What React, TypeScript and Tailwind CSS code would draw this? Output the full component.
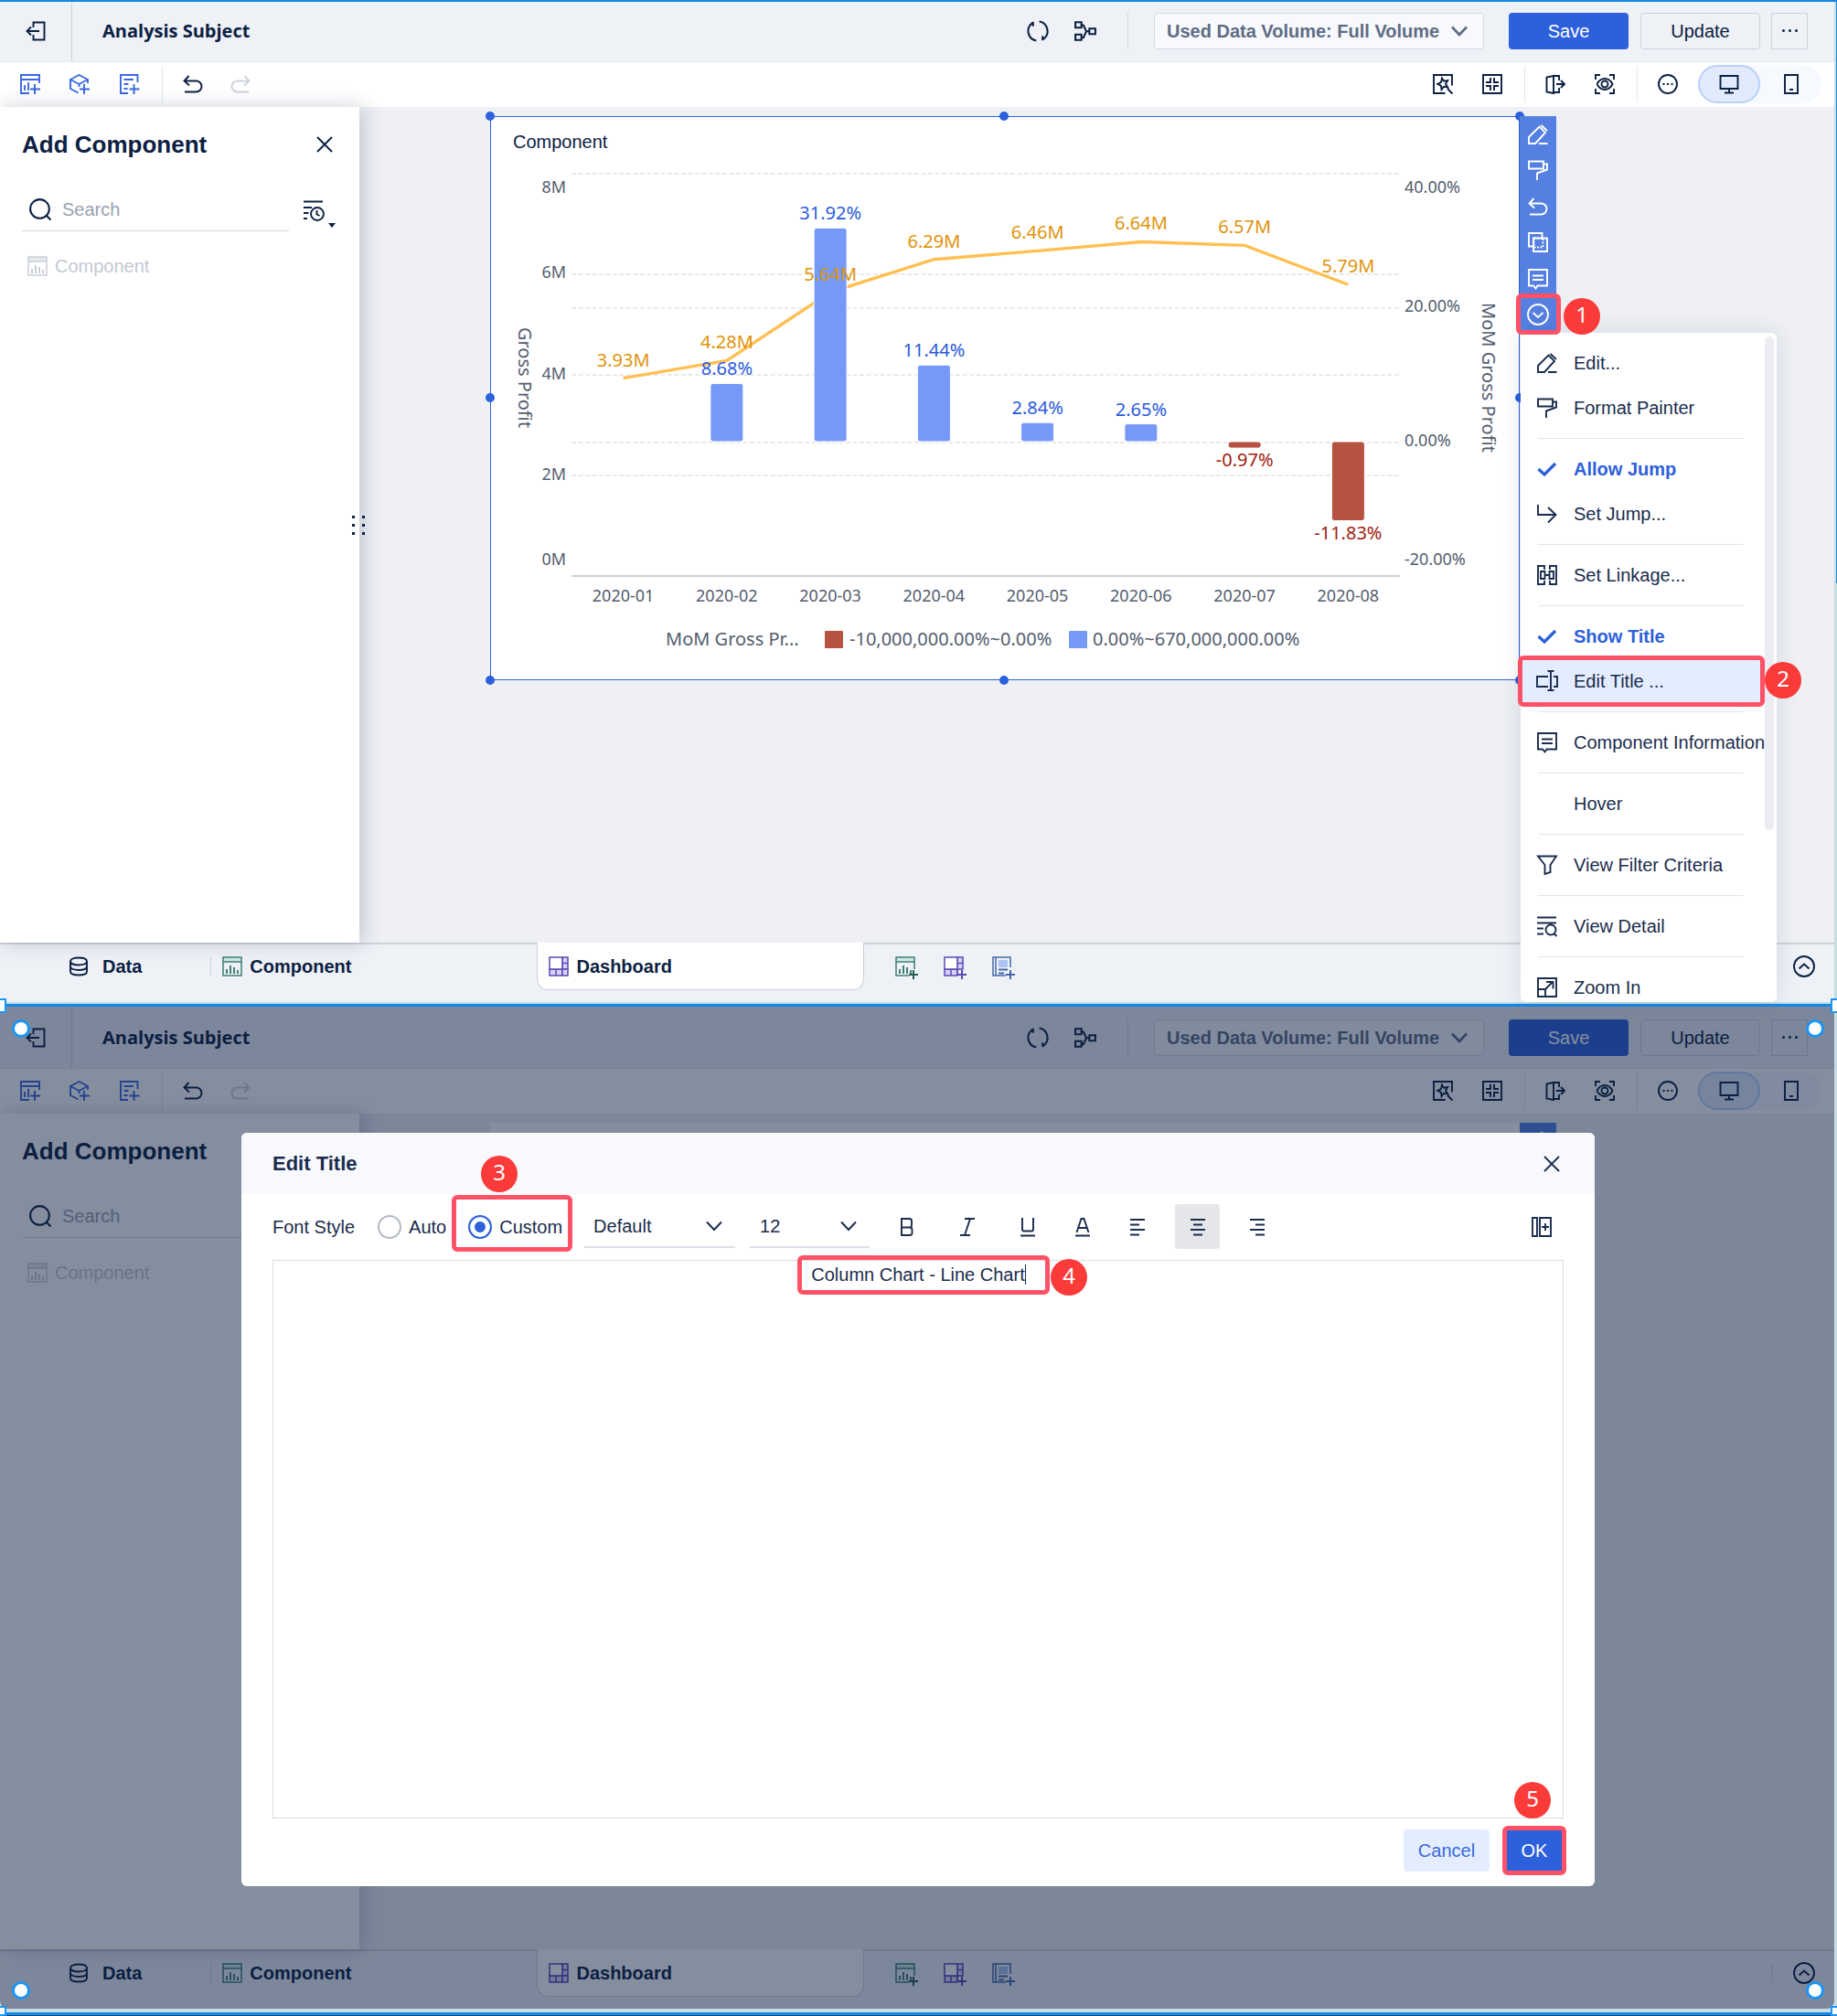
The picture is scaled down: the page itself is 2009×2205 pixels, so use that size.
import { Fragment, useState } from 'react';
import type { ReactNode } from 'react';

const ICONS: Record<string, ReactNode> = {
  exit: <path d="M8.5 7V1.5h12v19h-12V15M15 11H1.5M6 6.5 1.5 11 6 15.5" />,
  tableAdd: <path d="M21 10V1H1v20h9M1 6h20M5 12v6M9 9v9M16 11v11M11 16.500h11" />,
  cubeAdd: <path d="M20 10V6L10.500 1 1 6v10l8.500 4.500M1 6l9.500 5L20 6M10.500 11v3M16 11v11M11 16.500h11" />,
  docAdd: <path d="M19.500 9V1H1v20h8M4.500 6H15M4.500 11h5M4.500 16h4M15.500 11v11M10.500 16.500h11" />,
  undo: <path d="M6.500 2 1.500 7.500 7 12.500M2 7.500h12.500a6 6 0 0 1 0 12H2" />,
  redo: <path d="m15.500 2 5 5.500-5.500 5M20 7.500H7.500a6 6 0 0 0 0 12H20" />,
  close: <path d="m3 3 16 16M19 3 3 19" />,
  search: <path d="M10.500 1a9.500 9.500 0 1 0 0 19 9.500 9.500 0 0 0 0-19M17 17l4.500 4.500" />,
  history: <path d="M0 1.500h21M0 8h9M0 14h5.500M0 20h4M15 8a7 7 0 1 0 0 14 7 7 0 0 0 0-14M14.500 11v4.500l3 1.500" />,
  refresh: <path d="M9.500 20.600A9.800 9.800 0 0 1 5 3.300l1.800-1M12.500 1.400A9.800 9.800 0 0 1 17 18.700l-1.800 1M6.200 1.800v4.500M15.800 20.200v-4.500" />,
  flow: <path d="M1 2h6v5.500H1zM1 14.500h6V20H1zM15 8.500h6V14h-6zM7 5h2l3 6.250L9 17.500H7M12 11.250h3" />,
  starFrame: <path d="M21 12.500V1H1v20h12.500M10 4.500l2 3.300 4.200-.8-2.200 3.800 2.200 3.700-4.200-.8-2.500 3.300-.5-4.200-3.800-2 3.800-1.800zM16 16l5.500 5.500" />,
  collapse: <path d="M1 1h20v20H1zM9 4v5H4M13 4v5h5M4 13h5v5M18 13h-5v5" />,
  exportOut: <path d="M9 2 1.500 3.500v16L9 21zM9 2h6v5M9 20h6v-5M12 11h9M17 7l4 4-4 4" />,
  eyeFrame: <path d="M1 6V1h5M16 1h5v5M21 16v5h-5M6 21H1v-5M2.500 11c2-4 5-6 8.500-6s6.500 2 8.500 6c-2 4-5 6-8.500 6s-6.500-2-8.500-6M11 7.500a3.500 3.500 0 1 0 0 7 3.500 3.500 0 0 0 0-7" />,
  more: <path d="M11 1a10 10 0 1 0 0 20 10 10 0 0 0 0-20M5.500 11h2M10 11h2M14.500 11h2" />,
  monitor: <path d="M1.500 2h19v14h-19zM11 16v4M6 20.500h10" />,
  phone: <path d="M4 1h14v20H4zM9 17h4" />,
  edit: <path d="M1 21v-7L12.500 2.500l6.500 6.500L8 21zM14.500 1 21 7M12 21h9.500" />,
  painter: <path d="M1 1.500h16v8H1zM17 4.500h4v6l-11 4V22" />,
  copy: <path d="M15.500 6V1H1v14.500h5M6 6.500h15V21H6z" />,
  copyDots: <path d="M6.500 6.500h10v10h-10z" strokeDasharray="2 1.500" />,
  comment: <path d="M1 1h20v17.500H10.500L8.500 21.500 6 18.500H1zM5 7.500h12M5 12h12" />,
  circleDown: <path d="M11 0a11 11 0 1 0 0 22 11 11 0 0 0 0-22M5.500 9l5.500 5 5.500-5" />,
  circleUp: <path d="M11 0a11 11 0 1 0 0 22 11 11 0 0 0 0-22M5.500 13.500l5.500-5 5.500 5" />,
  check: <path d="m1.500 11 6.500 6L20 5" strokeWidth={3.4} />,
  jump: <path d="M1 1v11h19M12 4l8.500 8L12 20.500" />,
  linkage: <path d="M8 5V1H1v20h7v-4M14 5V1h7v20h-7v-4M4 7h4.500v8H4zM13.500 7H18v8h-4.500zM8.500 11h5" />,
  rename: <path d="M12 6H0v11h12M18 6h4v11h-4M15 0v21M11.500 0h7M11.500 21h7" />,
  filter: <path d="M1 1.500h20L14.500 11v8L8.500 21V11z" />,
  detail: <path d="M0 1.500h21M0 7.500h21M0 13.500h7M0 19.500h7M15 9.500a5.500 5.500 0 1 0 0 11 5.500 5.500 0 0 0 0-11M18.500 19l3 3" />,
  zoomIn: <path d="M1 1h20v20H1zM1 13h8v8M9 13l8-8M10 5h7.500v7.500" />,
  database: <path d="M11 1.500c5 0 9 1.500 9 4s-4 4-9 4-9-1.500-9-4 4-4 9-4M2 5.500v11c0 2.500 4 4 9 4s9-1.500 9-4v-11M2 11c0 2.500 4 4 9 4s9-1.500 9-4" />,
  bold: <path d="M5 2h8.500a2.500 2.500 0 0 1 2.500 2.500V9a2.500 2.500 0 0 1-2.500 2.500H5zM5 11.500h9a2.500 2.500 0 0 1 2.500 2.500v3.500A2.500 2.500 0 0 1 14 20H5z" />,
  italic: <path d="M8 2h11M3 20h11M14 2 8 20" />,
  underline: <path d="M5 1v12.500q0 2 2 2h8q2 0 2-2V1M3 20.500h16" />,
  fontColor: <path d="M4.500 17 9.500 2h3l5 15M6.500 12h9M3 20.500h16" />,
  alignLeft: <path d="M3 3h16M3 8.500h10M3 14h16M3 19.500h10" />,
  alignCenter: <path d="M3 3h16M6 8.500h10M3 14h16M6 19.500h10" />,
  alignRight: <path d="M3 3h16M9 8.500h10M3 14h16M9 19.500h10" />,
  insertField: <path d="M1 1h5v20H1zM9 1h12v20H9zM15 7v8M11 11h8" />,
  chevron: <path d="m3 6.500 8 8.500 8-8.500" />,
};

function Icon({ name, className = 'size-[22px]' }: { name: string; className?: string }) {
  return (
    <svg viewBox="0 0 22 22" className={`shrink-0 overflow-visible ${className}`} fill="none" stroke="currentColor" strokeWidth={1.9} aria-hidden="true">
      {ICONS[name]}
      {name === 'copy' && ICONS.copyDots}
    </svg>
  );
}

function ChartIcon({ line, fill, plus }: { line: string; fill: string; plus?: boolean }) {
  return (
    <svg viewBox="0 0 22 22" className="size-[22px] shrink-0 overflow-visible" fill="none" stroke={line} strokeWidth={1.5} aria-hidden="true">
      <path d="M1 1h20v5H1z" fill={fill} />
      <path d={plus ? 'M21 6v8M1 6v15h14' : 'M1 6v15h20V6'} />
      <path d="M5 19v-5M9 19v-9M13 19v-7M17 19v-4" strokeWidth={2} />
      {plus && <path d="M20 15v10M15 20h10" stroke="#275b57" strokeWidth={2} />}
    </svg>
  );
}

function BoardIcon({ plus }: { plus?: boolean }) {
  return (
    <svg viewBox="0 0 22 22" className="size-[22px] shrink-0 overflow-visible" stroke="#5a49b5" strokeWidth={1.5} fill="none" aria-hidden="true">
      <path d="M15 1h6v13h-6zM1 14h14v7H1z" fill="#d9d2f8" />
      <path d="M1 1h14v13H1z" fill="#fff" />
      <path d="M15 7.500h6M8 14v7M15 14v7" />
      {plus ? <path d="M20 15v10M15 20h10" strokeWidth={2} /> : <path d="M15 14h6v7h-6z" fill="#d9d2f8" />}
    </svg>
  );
}

function ReportIcon() {
  return (
    <svg viewBox="0 0 22 22" className="size-[22px] shrink-0 overflow-visible" stroke="#4668ad" strokeWidth={1.5} fill="none" aria-hidden="true">
      <path d="M20 12V1H1v20h14M4 1v20" />
      <path d="M7 4h10v8H7z" fill="#aac3f2" stroke="none" />
      <path d="M7 14.500h10M7 18.500h6M20 15v10M15 20h10" strokeWidth={2} />
    </svg>
  );
}

function Badge({ n, className }: { n: number; className: string }) {
  return (
    <span className={`absolute z-30 flex size-10 items-center justify-center rounded-full bg-[#fb3a3a] pb-1 font-['Noto_Sans',sans-serif] text-[24px] leading-none text-white ${className}`}>
      {n}
    </span>
  );
}

function Frame({ className }: { className: string }) {
  return <span className={`pointer-events-none absolute z-20 rounded-md border-[5px] border-[#ff5266] ${className}`} />;
}

const POINTS = [
  { month: '2020-01', profit: 3.93, mom: null },
  { month: '2020-02', profit: 4.28, mom: 8.68 },
  { month: '2020-03', profit: 5.64, mom: 31.92 },
  { month: '2020-04', profit: 6.29, mom: 11.44 },
  { month: '2020-05', profit: 6.46, mom: 2.84 },
  { month: '2020-06', profit: 6.64, mom: 2.65 },
  { month: '2020-07', profit: 6.57, mom: -0.97 },
  { month: '2020-08', profit: 5.79, mom: -11.83 },
];

const LEFT_AXIS = [['8M', 84], ['6M', 177], ['4M', 288], ['2M', 398], ['0M', 491]] as const;
const RIGHT_AXIS = [['40.00%', 84], ['20.00%', 214], ['0.00%', 361], ['-20.00%', 491]] as const;
const GRID = [63, 173, 210, 283, 357, 393];

const xOf = (i: number) => 89 + 113.25 * (i + 0.5);
const profitY = (v: number) => 503 - v * 55.05;
const momY = (v: number) => 356 - v * 7.32;

function Chart() {
  return (
    <svg viewBox="0 0 1126 617" className="block w-full font-['Noto_Sans',sans-serif] text-[20px]" role="img" aria-label="Gross Profit">
      <g className="text-[18px]" fill="#535d6e">
        {LEFT_AXIS.map(([t, y]) => <text key={t} x={83} y={y} textAnchor="end">{t}</text>)}
        {RIGHT_AXIS.map(([t, y]) => <text key={t} x={1000} y={y}>{t}</text>)}
        {POINTS.map((p, i) => <text key={p.month} x={xOf(i)} y={531} textAnchor="middle">{p.month}</text>)}
      </g>
      <g fill="#535d6e">
        <text transform="translate(31 286) rotate(90)" textAnchor="middle">Gross Profit</text>
        <text transform="translate(1085 286) rotate(90)" textAnchor="middle">MoM Gross Profit</text>
      </g>
      {GRID.map((y) => <path key={y} d={`M89 ${y}H995`} stroke="#e3e4e6" strokeWidth={1.5} strokeDasharray="5 2.500" />)}
      <path d="M89 503H995" stroke="#cfd0d2" strokeWidth={2} />
      <polyline points={POINTS.map((p, i) => `${xOf(i)},${profitY(p.profit)}`).join(' ')} fill="none" stroke="#ffbf52" strokeWidth={3.4} />
      {POINTS.map((p, i) => p.mom !== null && (
        <rect
          key={p.month}
          x={xOf(i) - 18}
          y={p.mom > 0 ? momY(p.mom) : 356}
          width={36}
          height={Math.abs(momY(p.mom) - 356)}
          rx={3}
          fill={p.mom > 0 ? '#7699f8' : '#b55242'}
          stroke="#fff"
        />
      ))}
      {POINTS.map((p, i) => (
        <g key={p.month} textAnchor="middle">
          <text x={xOf(i)} y={profitY(p.profit) - 13} fill="#df930b">{p.profit.toFixed(2)}M</text>
          {p.mom !== null && (
            <text x={xOf(i)} y={p.mom > 0 ? momY(p.mom) - 9 : momY(p.mom) + 20} fill={p.mom > 0 ? '#2b5bdb' : '#a1210f'}>
              {p.mom.toFixed(2)}%
            </text>
          )}
        </g>
      ))}
      <g fill="#535d6e">
        <text x={192} y={579}>MoM Gross Pr...</text>
        <rect x={366} y={563} width={20} height={19} rx={1} fill="#b55242" />
        <text x={393} y={579}>-10,000,000.00%~0.00%</text>
        <rect x={633} y={563} width={20} height={19} rx={1} fill="#7699f8" />
        <text x={659} y={579}>0.00%~670,000,000.00%</text>
      </g>
    </svg>
  );
}

const MENU = [
  [{ icon: 'edit', label: 'Edit...' }, { icon: 'painter', label: 'Format Painter' }],
  [{ icon: 'check', label: 'Allow Jump', on: true }, { icon: 'jump', label: 'Set Jump...' }],
  [{ icon: 'linkage', label: 'Set Linkage...' }],
  [{ icon: 'check', label: 'Show Title', on: true }, { icon: 'rename', label: 'Edit Title ...', active: true }],
  [{ icon: 'comment', label: 'Component Information' }],
  [{ icon: '', label: 'Hover' }],
  [{ icon: 'filter', label: 'View Filter Criteria' }],
  [{ icon: 'detail', label: 'View Detail' }],
  [{ icon: 'zoomIn', label: 'Zoom In' }],
] as { icon: string; label: string; on?: boolean; active?: boolean }[][];

function ContextMenu() {
  return (
    <div className="absolute left-px top-full z-10 w-[280px]">
      <div className="relative h-[732px] overflow-hidden rounded-md bg-white pt-2 shadow-[0_0_24px_rgba(20,40,80,0.12)]">
        {MENU.map((group, i) => (
          <Fragment key={group[0].label}>
            {i > 0 && <div className="ml-[19px] mr-9 flex h-[18px] items-center"><hr className="w-full border-t border-[#e2e5ec]" /></div>}
            {group.map((item) => (
              <button
                key={item.label}
                className={`flex h-[49px] w-[267px] items-center whitespace-nowrap pl-[18px] text-left ${item.active ? 'bg-[#e4edff]' : ''} ${item.on ? 'font-bold text-[#2d60db]' : 'text-[#1a2c4d]'}`}
              >
                <span className="mr-[18px] size-[22px]">{item.icon && <Icon name={item.icon} />}</span>
                {item.label}
              </button>
            ))}
          </Fragment>
        ))}
        <span className="absolute right-[3px] top-1 h-[540px] w-[10px] rounded-full bg-[#ecedf2]" />
      </div>
      <Frame className="-left-[3px] top-[353px] h-14 w-[270px]" />
      <Badge n={2} className="left-[267px] top-[360px]" />
    </div>
  );
}

const HANDLES = [
  '-left-[5px] -top-[5px]', 'left-1/2 -ml-[6px] -top-[5px]', '-right-[5px] -top-[5px]',
  '-left-[5px] top-1/2 -mt-[6px]', '-right-[5px] top-1/2 -mt-[6px]',
  '-left-[5px] -bottom-[5px]', 'left-1/2 -ml-[6px] -bottom-[5px]', '-right-[5px] -bottom-[5px]',
];

function ChartCard({ selected }: { selected: boolean }) {
  return (
    <div className="relative bg-white">
      <h3 className="absolute left-[25px] top-4 leading-6 text-[#0b2042]">Component</h3>
      <Chart />
      {selected && (
        <>
          <span className="absolute inset-0 border border-[#2d60db]" />
          {HANDLES.map((pos) => <span key={pos} className={`absolute size-[10px] rounded-full bg-[#2d60db] ${pos}`} />)}
        </>
      )}
      <div className="absolute left-full top-0 flex h-[237px] w-10 flex-col bg-[#5580e1] text-white">
        {['edit', 'painter', 'undo', 'copy', 'comment', 'circleDown'].map((name) => (
          <button key={name} aria-label={name} className="flex flex-1 items-center justify-center">
            <Icon name={name} />
          </button>
        ))}
        {selected && (
          <>
            <Frame className="-bottom-[2px] -left-[4px] h-[45px] w-[49px]" />
            <Badge n={1} className="-bottom-[2px] left-12" />
            <ContextMenu />
          </>
        )}
      </div>
    </div>
  );
}

function Header() {
  return (
    <header className="flex h-[68px] items-center border-b border-[#e6e9ef] bg-[#eef1f6] pr-[29px]">
      <button aria-label="Exit" className="flex h-full w-[79px] items-center justify-center border-r border-[#cdd2da]"><Icon name="exit" /></button>
      <h1 className="ml-[33px] font-['Open_Sans',sans-serif] text-[20px] font-bold">Analysis Subject</h1>
      <button aria-label="Refresh" className="ml-auto"><Icon name="refresh" className="size-6" /></button>
      <button aria-label="Data flow" className="ml-7"><Icon name="flow" className="size-6" /></button>
      <span className="ml-[34px] h-10 w-px bg-[#d3d7de]" />
      <div className="relative ml-7 w-[361px]">
        <select aria-label="Data volume" className="h-10 w-full appearance-none rounded-sm border border-[#d5d9e1] bg-[#f7f9fd] px-[13px] font-bold text-[#5f6c83]">
          <option>Used Data Volume: Full Volume</option>
        </select>
        <svg viewBox="0 0 22 22" className="pointer-events-none absolute right-4 top-[9px] size-[22px] text-[#5f6c83]" fill="none" stroke="currentColor" strokeWidth={2.6} aria-hidden="true">
          {ICONS.chevron}
        </svg>
      </div>
      <button className="ml-[27px] h-10 w-[131px] rounded-sm bg-[#2d60db] text-white">Save</button>
      <button className="ml-[13px] h-10 w-[131px] rounded-sm border border-[#cdd2da]">Update</button>
      <button aria-label="More" className="ml-3 flex size-10 items-center justify-center gap-1 border border-[#cdd2da]">
        <span className="size-[3px] rounded-full bg-current" />
        <span className="size-[3px] rounded-full bg-current" />
        <span className="size-[3px] rounded-full bg-current" />
      </button>
    </header>
  );
}

function Toolbar() {
  return (
    <div className="flex h-[49px] items-center bg-white pb-[2px] pl-[22px] pr-[14px]">
      <button aria-label="Add table" className="text-[#3a68e0]"><Icon name="tableAdd" /></button>
      <button aria-label="Add cube" className="ml-8 text-[#3a68e0]"><Icon name="cubeAdd" /></button>
      <button aria-label="Add text" className="ml-[33px] text-[#3a68e0]"><Icon name="docAdd" /></button>
      <span className="ml-6 h-10 w-px bg-[#e2e5ea]" />
      <button aria-label="Undo" className="ml-[22px]"><Icon name="undo" /></button>
      <button aria-label="Redo" className="ml-[30px] text-[#cdd2da]"><Icon name="redo" /></button>
      <button aria-label="Style" className="ml-auto"><Icon name="starFrame" /></button>
      <button aria-label="Collapse" className="ml-8"><Icon name="collapse" /></button>
      <span className="ml-6 h-10 w-px bg-[#e2e5ea]" />
      <button aria-label="Export" className="ml-[22px]"><Icon name="exportOut" /></button>
      <button aria-label="Preview" className="ml-8"><Icon name="eyeFrame" /></button>
      <span className="ml-6 h-10 w-px bg-[#e2e5ea]" />
      <button aria-label="More tools" className="ml-[22px]"><Icon name="more" /></button>
      <div className="ml-[22px] flex h-[42px] w-[135px] rounded-full bg-[#f6f9fe]">
        <button aria-label="Desktop" className="flex w-[68px] items-center justify-center rounded-full border-2 border-[#b9d0fa] bg-[#e1ebfd]"><Icon name="monitor" /></button>
        <button aria-label="Mobile" className="flex flex-1 items-center justify-center"><Icon name="phone" /></button>
      </div>
    </div>
  );
}

function SidePanel() {
  return (
    <aside className="relative w-[393px] shrink-0 bg-white shadow-[4px_0_20px_rgba(20,40,80,0.22)]">
      <div className="flex items-center justify-between pl-6 pr-[27px] pt-6">
        <h2 className="text-[26px] font-bold leading-[34px]">Add Component</h2>
        <button aria-label="Close panel"><Icon name="close" /></button>
      </div>
      <div className="mt-8 flex items-start pl-6">
        <label className="flex h-[46px] w-[292px] items-center border-b border-[#d5d9e1] pl-2 pb-px">
          <Icon name="search" className="size-6" />
          <input type="text" aria-label="Search" placeholder="Search" className="ml-3 w-full bg-transparent outline-none placeholder:text-[#98a1b1]" />
        </label>
        <button aria-label="Sort" className="relative ml-4 mt-3">
          <Icon name="history" />
          <svg viewBox="0 0 8 5" className="absolute -bottom-2 -right-[13px] h-[5px] w-2" fill="currentColor" aria-hidden="true"><path d="M0 0h8L4 5z" /></svg>
        </button>
      </div>
      <div className="mt-[23px] flex items-center gap-2 pl-[30px] text-[#c3c9d3]">
        <ChartIcon line="#c9ced8" fill="#e6e9ee" />
        Component
      </div>
      <div className="absolute -right-[6px] top-1/2 -mt-[10px] grid grid-cols-2 gap-x-2 gap-y-[6px]">
        {[0, 1, 2, 3, 4, 5].map((d) => <span key={d} className="size-[3px] bg-[#0b2042]" />)}
      </div>
    </aside>
  );
}

function Footer() {
  return (
    <footer className="flex h-[65px] border-t-2 border-[#cdd2da] bg-[#eef1f6] pr-[22px] font-bold">
      <button className="mb-4 ml-[75px] flex items-center gap-[15px]"><Icon name="database" />Data</button>
      <span className="ml-[75px] mt-[14px] h-5 w-px bg-[#cdd2da]" />
      <button className="mb-4 ml-3 flex items-center gap-2"><ChartIcon line="#3f7f78" fill="#cfe8e0" />Component</button>
      <button className="-mt-[2px] mb-[13px] ml-[203px] flex w-[358px] items-center gap-2 rounded-b-xl border border-t-0 border-[#cdd2da] bg-white pl-3"><BoardIcon />Dashboard</button>
      <div className="mb-4 ml-[34px] flex items-center gap-[31px]">
        <button aria-label="Add component"><ChartIcon line="#3f7f78" fill="#cfe8e0" plus /></button>
        <button aria-label="Add dashboard"><BoardIcon plus /></button>
        <button aria-label="Add report"><ReportIcon /></button>
      </div>
      <span className="ml-auto mt-[14px] h-5 w-px bg-[#cdd2da]" />
      <button aria-label="Expand" className="mb-4 ml-6"><Icon name="circleUp" /></button>
    </footer>
  );
}

function EditTitleDialog() {
  const [mode, setMode] = useState('custom');
  const [title, setTitle] = useState('Column Chart - Line Chart');
  const radio = "size-[26px] appearance-none rounded-full border-2 border-[#b3b9c5] checked:border-[#2d60db] checked:bg-[#2d60db] checked:shadow-[inset_0_0_0_5px_white]";

  return (
    <div role="dialog" aria-label="Edit Title" className="w-full rounded-md bg-white text-[#1a2c4d]">
      <div className="flex h-[67px] items-center justify-between rounded-t-md bg-[#f7f9fd] pl-[34px] pr-9">
        <h2 className="text-[22px] font-bold">Edit Title</h2>
        <button aria-label="Close"><Icon name="close" /></button>
      </div>
      <div className="flex h-[72px] items-center px-[34px] pb-px">
        <span>Font Style</span>
        <label className="ml-[25px] flex items-center gap-2">
          <input type="radio" name="fontStyle" className={radio} checked={mode === 'auto'} onChange={() => setMode('auto')} />Auto
        </label>
        <label className="relative ml-6 flex items-center gap-2">
          <input type="radio" name="fontStyle" className={radio} checked={mode === 'custom'} onChange={() => setMode('custom')} />Custom
          <Frame className="-left-[18px] -right-[11px] -top-5 h-[62px]" />
          <Badge n={3} className="-top-[63px] left-[14px]" />
        </label>
        <div className="relative ml-6 w-[165px]">
          <select aria-label="Font family" className="h-[47px] w-full appearance-none border-b-2 border-[#dde1e7] px-[10px]"><option>Default</option></select>
          <Icon name="chevron" className="pointer-events-none absolute right-3 top-3 size-[22px]" />
        </div>
        <div className="relative ml-4 w-[131px]">
          <select aria-label="Font size" className="h-[47px] w-full appearance-none border-b-2 border-[#dde1e7] px-[11px]"><option>12</option></select>
          <Icon name="chevron" className="pointer-events-none absolute right-3 top-3 size-[22px]" />
        </div>
        <button aria-label="Bold" className="ml-[30px]"><Icon name="bold" /></button>
        <button aria-label="Italic" className="ml-11"><Icon name="italic" /></button>
        <button aria-label="Underline" className="ml-11"><Icon name="underline" /></button>
        <button aria-label="Font color" className="ml-[38px]"><Icon name="fontColor" /></button>
        <button aria-label="Align left" className="ml-[38px]"><Icon name="alignLeft" /></button>
        <button aria-label="Align center" className="ml-[30px] flex size-[49px] items-center justify-center rounded-sm bg-[#e4e6ea]"><Icon name="alignCenter" /></button>
        <button aria-label="Align right" className="ml-[30px]"><Icon name="alignRight" /></button>
        <button aria-label="Insert field" className="ml-auto mr-[13px]"><Icon name="insertField" /></button>
      </div>
      <div className="relative mx-[34px]">
        <textarea
          aria-label="Title text"
          value={title}
          onChange={(e) => setTitle(e.target.value)}
          className="block h-[611px] w-full resize-none border border-[#d9dce4] pt-[3px] text-center leading-6 outline-none"
        />
        <div className="pointer-events-none absolute left-1/2 -top-[5px] -ml-[132px] h-[43px] w-[276px]">
          <Frame className="inset-0" />
          <span className="absolute right-[26px] top-[10px] h-[22px] w-px bg-[#1a2c4d]" />
          <Badge n={4} className="-right-[41px] top-1" />
        </div>
      </div>
      <div className="flex justify-end gap-[19px] pb-4 pr-9 pt-3">
        <button className="h-[46px] w-[94px] rounded-sm bg-[#e4edff] text-[#3a69dd]">Cancel</button>
        <button className="relative h-[46px] w-[60px] bg-[#2d60db] text-white">
          OK
          <Frame className="-inset-x-[5px] -inset-y-1" />
          <Badge n={5} className="-top-[52px] left-2" />
        </button>
      </div>
    </div>
  );
}

function Workspace({ editing }: { editing: boolean }) {
  return (
    <section className="relative mr-[3px] flex flex-1 flex-col rounded-lg text-[20px] text-[#0b2042]">
      <Header />
      <Toolbar />
      <main className="flex min-h-[914px] flex-1 bg-[#eef0f4]">
        <SidePanel />
        <div className="min-w-0 flex-1 pl-[143px] pr-[344px] pt-[10px]">
          <ChartCard selected={!editing} />
        </div>
      </main>
      <Footer />
      {editing && (
        <div className="absolute inset-0 z-20 rounded-b-lg bg-[#0c1d3f]/50 pl-[264px] pr-[262px] pt-[138px]">
          <EditTitleDialog />
        </div>
      )}
    </section>
  );
}

export default function App() {
  const dot = 'absolute z-30 size-5 rounded-full border-[3px] border-[#1b95f5] bg-white';
  const corner = 'absolute z-30 h-4 w-[7px] border-2 border-[#1b95f5] bg-white';

  return (
    <div className="flex min-h-screen flex-col bg-[#c8dde1] font-['Liberation_Sans',sans-serif]">
      <div className="relative flex flex-1 flex-col pb-[5px]">
        <Workspace editing={false} />
        <span className="absolute inset-x-0 top-0 h-[2px] bg-[#1389e8]" />
        <span className="absolute inset-x-0 bottom-0 h-[3px] bg-[#1389e8]" />
        <span className="absolute right-0 top-0 h-[638px] w-px bg-[#1389e8]" />
        <span className={`${corner} -bottom-[7px] left-0 border-l-0`} />
        <span className={`${corner} -bottom-[7px] right-0 border-r-0`} />
      </div>
      <div className="relative flex flex-1 flex-col pb-2">
        <Workspace editing />
        <span className={`${dot} left-[13px] top-[14px]`} />
        <span className={`${dot} right-[14px] top-[14px]`} />
        <span className={`${dot} bottom-[18px] left-[13px]`} />
        <span className={`${dot} bottom-[18px] right-[14px]`} />
        <span className="absolute inset-x-0 bottom-0 h-1 border-b border-[#0f4a7a] bg-[#1389e8]" />
        <span className={`${corner} bottom-0 left-0 h-[11px] border-l-0`} />
        <span className={`${corner} bottom-0 right-0 h-[11px] border-r-0`} />
      </div>
    </div>
  );
}
